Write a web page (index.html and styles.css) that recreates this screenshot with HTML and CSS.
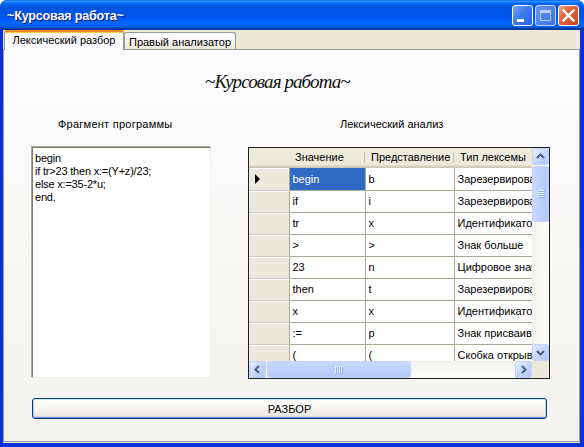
FILE: index.html
```html
<!DOCTYPE html>
<html lang="ru">
<head>
<meta charset="utf-8">
<title>~Курсовая работа~</title>
<link rel="stylesheet" href="styles.css">
</head>
<body>
<div class="window">
  <div class="titlebar">
    <span class="title">~Курсовая работа~</span>
    <div class="controls">
      <span class="cbtn cbtn-min"><svg width="19" height="19" viewBox="0 0 19 19"><rect x="4" y="13" width="7" height="3" fill="#fff"/></svg></span>
      <span class="cbtn cbtn-max"><svg width="19" height="19" viewBox="0 0 19 19"><rect x="4.5" y="4.5" width="10" height="10" fill="none" stroke="#b9cdf7" stroke-width="1"/><rect x="4" y="4" width="11" height="3" fill="#b9cdf7"/></svg></span>
      <span class="cbtn cbtn-close"><svg width="19" height="19" viewBox="0 0 19 19"><path d="M4.5 4.5 L14.5 14.5 M14.5 4.5 L4.5 14.5" stroke="#fff" stroke-width="2.4" stroke-linecap="square"/></svg></span>
    </div>
  </div>
  <div class="client">
    <div class="tabs">
      <div class="tab tab-active">Лексический разбор</div>
      <div class="tab">Правый анализатор</div>
    </div>
    <div class="page">
      <div class="heading">~Курсовая работа~</div>
      <div class="columns">
        <div class="label label-left">Фрагмент программы</div>
        <div class="label label-right">Лексический анализ</div>
        <div class="textbox">begin<br>if tr&gt;23 then x:=(Y+z)/23;<br>else x:=35-2*u;<br>end.</div>
        <div class="dgv">
          <div class="dgv-view">
            <table class="dgv-table">
              <colgroup><col class="c-rh"><col class="c-1"><col class="c-2"><col class="c-3"></colgroup>
              <thead>
                <tr><th class="rh-top"></th><th>Значение</th><th>Представление</th><th>Тип лексемы</th></tr>
              </thead>
              <tbody>
                <tr><th class="rh"><span class="cur-arrow"></span></th><td class="sel">begin</td><td>b</td><td>Зарезервированное слово</td></tr>
                <tr><th class="rh"></th><td>if</td><td>i</td><td>Зарезервированное слово</td></tr>
                <tr><th class="rh"></th><td>tr</td><td>x</td><td>Идентификатор</td></tr>
                <tr><th class="rh"></th><td>&gt;</td><td>&gt;</td><td>Знак больше</td></tr>
                <tr><th class="rh"></th><td>23</td><td>n</td><td>Цифровое значение</td></tr>
                <tr><th class="rh"></th><td>then</td><td>t</td><td>Зарезервированное слово</td></tr>
                <tr><th class="rh"></th><td>x</td><td>x</td><td>Идентификатор</td></tr>
                <tr><th class="rh"></th><td>:=</td><td>p</td><td>Знак присваивания</td></tr>
                <tr><th class="rh"></th><td>(</td><td>(</td><td>Скобка открывающая</td></tr>
              </tbody>
            </table>
          </div>
          <div class="vscroll">
            <span class="sb-btn"><svg width="15" height="15" viewBox="0 0 15 15"><path d="M4 9 L7.5 5.5 L11 9" fill="none" stroke="#4d6185" stroke-width="2"/></svg></span>
            <div class="v-track"><span class="v-thumb"><svg width="8" height="8" viewBox="0 0 8 8"><path d="M0 0.5H7M0 2.5H7M0 4.5H7M0 6.5H7" stroke="#eef4fe" stroke-width="1"/><path d="M1 1.5H8M1 3.5H8M1 5.5H8M1 7.5H8" stroke="#8cb0f8" stroke-width="1"/></svg></span></div>
            <span class="sb-btn"><svg width="15" height="15" viewBox="0 0 15 15"><path d="M4 6 L7.5 9.5 L11 6" fill="none" stroke="#4d6185" stroke-width="2"/></svg></span>
          </div>
          <div class="hscroll">
            <span class="sb-btn"><svg width="15" height="15" viewBox="0 0 15 15"><path d="M9 4 L5.5 7.5 L9 11" fill="none" stroke="#4d6185" stroke-width="2"/></svg></span>
            <div class="h-track"><span class="h-thumb"><svg width="8" height="8" viewBox="0 0 8 8"><path d="M0.5 0V7M2.5 0V7M4.5 0V7M6.5 0V7" stroke="#eef4fe" stroke-width="1"/><path d="M1.5 1V8M3.5 1V8M5.5 1V8M7.5 1V8" stroke="#8cb0f8" stroke-width="1"/></svg></span></div>
            <span class="sb-btn"><svg width="15" height="15" viewBox="0 0 15 15"><path d="M6 4 L9.5 7.5 L6 11" fill="none" stroke="#4d6185" stroke-width="2"/></svg></span>
          </div>
          <div class="sb-corner"></div>
        </div>
      </div>
      <div class="button">РАЗБОР</div>
    </div>
  </div>
</div>
</body>
</html>
```

FILE: styles.css
```css
* { box-sizing: border-box; }
html, body { margin: 0; padding: 0; }
body {
  width: 584px;
  height: 447px;
  overflow: hidden;
  background: #ffffff;
  font-family: "Liberation Sans", Arial, sans-serif;
  font-size: 11px;
  color: #000;
}
.window {
  width: 584px;
  height: 447px;
  display: flex;
  flex-direction: column;
  background: #0831d9;
  border-radius: 7px 7px 0 0;
  overflow: hidden;
}
.titlebar {
  height: 30px;
  flex: none;
  display: flex;
  align-items: center;
  justify-content: space-between;
  padding: 0 5px 0 7px;
  background: linear-gradient(to bottom, #0058ee 0%, #3593ff 4%, #288eff 6%, #127dff 8%, #036ffc 10%, #0262ee 14%, #0057e5 20%, #0054e3 24%, #0055eb 56%, #005bf5 66%, #026afe 76%, #0062ef 86%, #0052d6 92%, #0040ab 94%, #003092 100%);
}
.title {
  color: #fff;
  font-family: "Liberation Sans", Arial, sans-serif;
  font-weight: bold;
  font-size: 12.5px;
  letter-spacing: -0.15px;
  text-shadow: 1px 1px 0 #0a1883;
  padding-top: 1px;
}
.controls { display: flex; gap: 2px; padding-top: 1px; }
.cbtn {
  width: 21px;
  height: 21px;
  border: 1px solid #fff;
  border-radius: 3px;
  display: block;
}
.cbtn svg { display: block; }
.cbtn-min { background: linear-gradient(135deg, #7aa5fa 0%, #3d7af0 45%, #2563e6 100%); }
.cbtn-max { background: linear-gradient(135deg, #6c96f2 0%, #4c82ee 50%, #3a70e6 100%); border-color: #c6d6f8; }
.cbtn-close { background: linear-gradient(135deg, #f0a58a 0%, #e2623b 40%, #c9421c 100%); }

.client {
  flex: 1;
  margin: 0 4px 4px 3px;
  background: #ece9d8;
  display: flex;
  flex-direction: column;
}
.tabs {
  height: 19px;
  flex: none;
  display: flex;
  align-items: flex-end;
  padding-left: 1px;
}
.tab {
  height: 17px;
  width: 112px;
  border: 1px solid #919b9c;
  border-bottom: none;
  border-radius: 3px 3px 0 0;
  background: linear-gradient(to bottom, #fefefe 0%, #f4f3ee 60%, #ece9d8 100%);
  display: flex;
  align-items: center;
  justify-content: center;
  padding-top: 1px;
}
.tab-active {
  position: relative;
  z-index: 1;
  width: 120px;
  height: 20px;
  margin-bottom: -1px;
  background: #fcfcfe;
  border-top: 2px solid #e68b2c;
  box-shadow: inset 0 1px 0 #ffc73c;
  padding-top: 0;
  padding-bottom: 2px;
}
.page {
  flex: 1;
  margin-bottom: 1px;
  border: 1px solid #919b9c;
  background: linear-gradient(to bottom, #fcfcfe 0%, #f4f3ee 100%);
  display: flex;
  flex-direction: column;
}
.heading {
  margin-top: 20px;
  padding-left: 201px;
  height: 24px;
  line-height: 24px;
  font-family: "Liberation Serif", "Times New Roman", serif;
  font-style: italic;
  font-size: 19px;
  letter-spacing: -0.9px;
  color: #111;
}
.columns {
  margin-top: 24px;
  padding-left: 27px;
  display: grid;
  grid-template-columns: 180px 302px;
  grid-template-rows: 13px auto;
  column-gap: 37px;
  row-gap: 16px;
}
.label { line-height: 13px; white-space: nowrap; }
.label-left { padding-left: 27px; letter-spacing: 0.25px; }
.label-right { padding-left: 92px; }
.textbox {
  height: 231px;
  background: #fff;
  border-style: solid;
  border-width: 1px 1px 1px 1px;
  border-color: #7f7d72 #f1efe2 #f1efe2 #7f7d72;
  box-shadow: -1px -1px 0 #aca899;
  margin-left: 1px;
  padding: 4px 2px;
  line-height: 13px;
  letter-spacing: -0.2px;
  white-space: nowrap;
}
.dgv {
  width: 302px;
  height: 232px;
  border: 1px solid #222;
  background: #ababab;
  display: grid;
  grid-template-columns: 283px 17px;
  grid-template-rows: 213px 17px;
}
.dgv-view { overflow: hidden; background: #fff; }
.dgv-table {
  table-layout: fixed;
  border-collapse: collapse;
  width: 325px;
}
.c-rh { width: 40px; }
.c-1 { width: 76px; }
.c-2 { width: 89px; }
.c-3 { width: 120px; }
.dgv-table thead th {
  position: relative;
  height: 20px;
  padding: 0 0 2px 6px;
  font-weight: normal;
  text-align: left;
  white-space: nowrap;
  overflow: hidden;
  background: linear-gradient(to bottom, #ebeadb 0, #ebeadb 17px, #e2decd 17px, #e2decd 18px, #d6d2c2 18px, #d6d2c2 19px, #cbc7b8 19px);
}
.dgv-table thead th::after {
  content: "";
  position: absolute;
  right: 0;
  top: 4px;
  bottom: 5px;
  width: 1px;
  background: #c7c5b2;
  box-shadow: 1px 0 0 #fff;
}
.dgv-table thead th.rh-top::after { display: none; }
.dgv-table tbody td {
  height: 22px;
  padding: 0 0 0 3px;
  border-right: 1px solid #aca899;
  border-bottom: 1px solid #aca899;
  white-space: nowrap;
  overflow: hidden;
}
.dgv-table tbody td.sel { background: #316ac5; color: #fff; }
.dgv-table .rh {
  height: 22px;
  padding: 0 0 0 6px;
  text-align: left;
  background: #ebe9dc;
  border-right: 1px solid #aca899;
  border-bottom: 1px solid #cbc7b8;
  box-shadow: inset 0 1px 0 #fff;
}
.cur-arrow {
  display: block;
  width: 0;
  height: 0;
  border-left: 5px solid #000;
  border-top: 5px solid transparent;
  border-bottom: 5px solid transparent;
}
.vscroll {
  display: flex;
  flex-direction: column;
  background: linear-gradient(to right, #f3f1ec, #fefefb);
}
.hscroll {
  display: flex;
  background: linear-gradient(to bottom, #f3f1ec, #fefefb);
}
.sb-corner { background: #ece9d8; }
.sb-btn {
  flex: none;
  width: 17px;
  height: 17px;
  border: 1px solid #c3d3fd;
  border-radius: 2px;
  background: linear-gradient(135deg, #e6eefd 0%, #c6d7fc 50%, #b0c7f5 100%);
  display: flex;
  align-items: center;
  justify-content: center;
}
.sb-btn svg { display: block; }
.v-track { flex: 1; display: flex; flex-direction: column; }
.v-thumb {
  margin-top: 1px;
  height: 56px;
  border: 1px solid #c3d3fd;
  border-radius: 2px;
  background: linear-gradient(to right, #c9d8fc 0%, #bcd0fb 50%, #b3c9f6 100%);
  display: flex;
  align-items: center;
  justify-content: center;
}
.h-track { flex: 1; display: flex; }
.h-thumb {
  margin-left: 1px;
  width: 144px;
  border: 1px solid #c3d3fd;
  border-radius: 2px;
  background: linear-gradient(to bottom, #c9d8fc 0%, #bcd0fb 50%, #b3c9f6 100%);
  display: flex;
  align-items: center;
  justify-content: center;
}
.button {
  margin: 19px 0 0 28px;
  width: 515px;
  height: 21px;
  border: 1px solid #003c74;
  border-radius: 3px;
  background: linear-gradient(to bottom, #ffffff 0%, #f6f5f1 50%, #ecebe6 85%, #d6d0c5 100%);
  box-shadow: inset 0 1px 0 #cee7ff, inset 1px 0 0 #b8d2fa, inset -1px 0 0 #b8d2fa, inset 0 -1px 0 #6982ee;
  display: flex;
  align-items: center;
  justify-content: center;
}
```
